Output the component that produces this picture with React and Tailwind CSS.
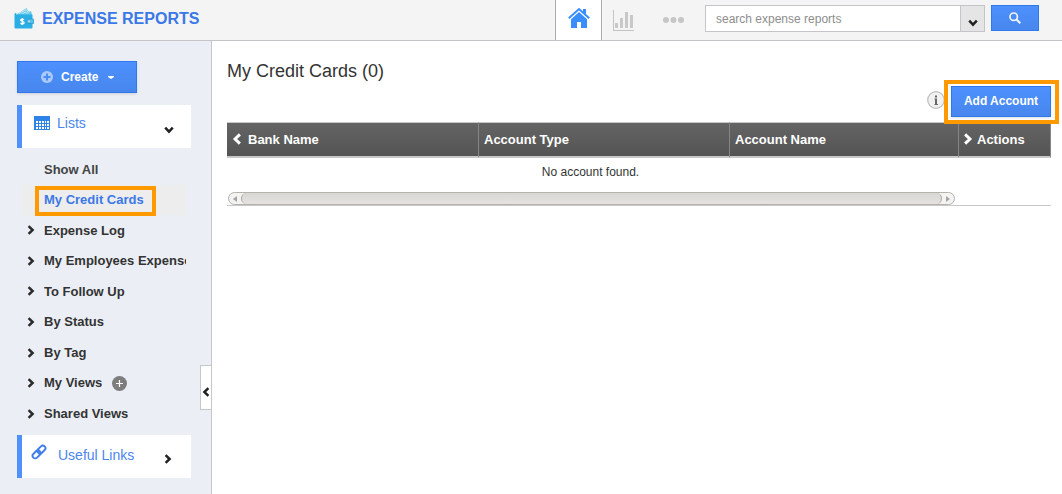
const views = [
  { label: 'Show All', leaf: true },
  { label: 'My Credit Cards', leaf: true, active: true },
  { label: 'Expense Log' },
  { label: 'My Employees Expenses' },
  { label: 'To Follow Up' },
  { label: 'By Status' },
  { label: 'By Tag' },
  { label: 'My Views', add: true },
  { label: 'Shared Views' },
];

const rotations = { right: '', left: 'rotate-180', down: 'rotate-90' };

function Chevron({ dir = 'right', className = 'h-2.5 w-2' }) {
  return (
    <svg viewBox="0 0 8 10" aria-hidden="true" className={`shrink-0 ${rotations[dir]} ${className}`}>
      <path d="M1.6 1.2 5.6 5 1.6 8.8" fill="none" stroke="currentColor" strokeWidth="2.5" />
    </svg>
  );
}

function WalletIcon() {
  return (
    <svg viewBox="0 0 20 23" aria-hidden="true" className="h-[23px] w-5">
      <path d="M2.500 7.500 12.500 1l2.300 3.700L17 4l1.500 4.500H2.500z" fill="#6ccbea" />
      <path d="m5 6.500 7.300-4 2 3.500M8.500 6.500l3-1.500 1.500 1.800" fill="none" stroke="#d5f1fa" strokeWidth=".8" />
      <path d="M.5 7.500C.5 6.500 1 6 2.500 6L2 7.500h15.500q1 0 1 1v12q0 1-1 1H1.500q-1 0-1-1z" fill="#29aee6" />
      <path d="M14.800 12H19.500v4.500h-4.700a2.250 2.250 0 0 1 0-4.500z" fill="#5cbfe6" stroke="#1c98cc" strokeWidth=".7" />
      <circle cx="15" cy="14.300" r=".8" fill="#d9f2fb" />
      <path d="M10 12.700c-1-.9-3.300-.7-3.300.6 0 1.500 3.400.8 3.400 2.400 0 1.400-2.500 1.500-3.600.5M8.300 10.900v7" fill="none" stroke="#fff" strokeWidth="1.300" />
    </svg>
  );
}

function HomeIcon() {
  return (
    <svg viewBox="0 0 22 22" aria-hidden="true" className="h-[22px] w-[22px] fill-[#3a8dfd]">
      <path d="M15 2h3v6l-3-2.700z" />
      <path d="M.8 11.300 11 2l10.200 9.300" fill="none" stroke="#3a8dfd" strokeWidth="2" />
      <path d="M3 12.200 11 5l8 7.200V21h-6v-6H9v6H3z" />
    </svg>
  );
}

function ChartIcon() {
  return (
    <svg viewBox="0 0 22 22" aria-hidden="true" className="h-[22px] w-[22px]" shapeRendering="crispEdges">
      <path d="M0 0h1v20h20v1H0z" fill="#c4c4c4" />
      <path d="M2 13h3v5H2zM7 8h3v10H7zM12 2h3v16h-3zM17 5h3v13h-3z" fill="#c8c8c8" />
    </svg>
  );
}

function LinkIcon() {
  return (
    <svg viewBox="0 0 16 16" aria-hidden="true" className="mb-2.5 h-4 w-4 shrink-0" fill="none" stroke="#3f7de8" strokeWidth="1.900">
      <g transform="rotate(-45 8 8)">
        <rect x="0" y="5.400" width="9" height="5.200" rx="2.600" />
        <rect x="7" y="5.400" width="9" height="5.200" rx="2.600" />
      </g>
    </svg>
  );
}

function Header() {
  return (
    <header className="flex h-[41px] items-stretch border-b border-[#c4c4c8] bg-[#f4f4f4]">
      <a href="#home" className="flex items-center gap-2 pb-1 pl-3.5 text-base font-bold text-[#3a78e8]">
        <WalletIcon />
        <span className="pt-0.5">EXPENSE REPORTS</span>
      </a>
      <nav className="ml-auto flex items-stretch">
        <a href="#home" aria-label="Home" className="flex w-[47px] items-center justify-center border-x border-[#ababab] bg-white pb-1">
          <HomeIcon />
        </a>
        <a href="#charts" aria-label="Charts" className="flex items-center pt-0.5 pl-[11px]">
          <ChartIcon />
        </a>
        <a href="#more" aria-label="More" className="flex items-center pl-7">
          <svg viewBox="0 0 21 6" aria-hidden="true" className="h-1.5 w-[21px] fill-[#c6c6c6]">
            <circle cx="3" cy="3" r="3" />
            <circle cx="10.500" cy="3" r="3" />
            <circle cx="18" cy="3" r="3" />
          </svg>
        </a>
      </nav>
      <form className="flex items-start pt-[5px] pr-[23px] pl-[21px]">
        <input
          type="text"
          aria-label="Search expense reports"
          placeholder="search expense reports"
          className="h-[27px] w-64 border border-[#c5c5c9] bg-white px-2.5 text-xs outline-none placeholder:text-[#8e8e8e]"
        />
        <button type="button" aria-label="Search options" className="flex h-[27px] w-6 items-center justify-center border border-l-0 border-[#c5c5c9] bg-[#e5e5e5] pt-2 text-[#222]">
          <Chevron dir="down" />
        </button>
        <button type="button" aria-label="Search" className="ml-1.5 flex h-[26px] w-12 items-center justify-center border border-[#3079ed] bg-linear-to-b from-[#4d90fe] to-[#4787ed]">
          <svg viewBox="0 0 12 12" aria-hidden="true" className="h-3 w-3" fill="none" stroke="#f0f5fe">
            <circle cx="4.700" cy="4.700" r="3.700" strokeWidth="1.700" />
            <path d="m7.300 7.300 4 4" strokeWidth="2" />
          </svg>
        </button>
      </form>
    </header>
  );
}

function ListItem({ item }) {
  return (
    <li className={`relative flex min-w-0 items-center pl-[5px] ${item.active ? 'bg-[#ededed]' : ''}`}>
      <span className="flex w-[17px] shrink-0 items-center text-[#2b2b2b]">{!item.leaf && <Chevron />}</span>
      <a
        href="#view"
        className={`overflow-hidden whitespace-nowrap ${item.active ? 'text-[#3c78e6]' : item.leaf ? 'text-[#444]' : 'text-[#333]'}`}
      >
        {item.label}
      </a>
      {item.add && (
        <button type="button" aria-label="Add view" className="ml-2.5">
          <svg viewBox="0 0 15 15" aria-hidden="true" className="h-[15px] w-[15px]">
            <circle cx="7.500" cy="7.500" r="7.500" fill="#7d7d7d" />
            <path d="M7.500 4v7M4 7.500h7" stroke="#fff" strokeWidth="1.200" />
          </svg>
        </button>
      )}
      {item.active && <span className="pointer-events-none absolute top-px left-[13px] h-[30px] w-[121px] border-4 border-[#ff9900]" />}
    </li>
  );
}

function Sidebar() {
  return (
    <aside className="relative w-[212px] shrink-0 border-r border-[#c6c7cb] bg-[#ebeff5] pt-5 pb-4 pl-[17px]">
      <button type="button" className="flex h-8 w-[120px] items-center border border-[#3079ed] bg-linear-to-b from-[#4d90fe] to-[#4787ed] pl-[23px] text-xs font-bold text-white shadow-sm">
        <svg viewBox="0 0 12 12" aria-hidden="true" className="h-3 w-3">
          <circle cx="6" cy="6" r="6" fill="#abcafa" />
          <path d="M6 2.500v7M2.500 6h7" stroke="#4b8bf5" strokeWidth="2" />
        </svg>
        <span className="ml-2">Create</span>
        <svg viewBox="0 0 6 3" aria-hidden="true" className="ml-2.5 h-[3px] w-1.5 fill-white">
          <path d="M0 0h6v1L3 3 0 1z" />
        </svg>
      </button>
      <button type="button" aria-expanded="true" className="mt-3 flex h-[43px] w-[174px] items-center border-l-[5px] border-[#4d90fe] bg-white pr-[18px] pl-3 text-sm text-[#4a86ee]">
        <svg viewBox="0 0 16 14" aria-hidden="true" className="mb-2 h-3.5 w-4 shrink-0" shapeRendering="crispEdges">
          <path d="M0 0h16v14H0z" fill="#2f82e6" />
          <path d="M2 5h2v2H2zM5 5h2v2H5zM8 5h2v2H8zM11 5h1v2h-1zM13 5h2v2h-2zM2 8h2v2H2zM5 8h2v2H5zM8 8h2v2H8zM11 8h1v2h-1zM13 8h2v2h-2zM2 11h2v2H2zM5 11h2v2H5zM8 11h2v2H8zM11 11h1v2h-1zM13 11h2v2h-2z" fill="#fff" />
        </svg>
        <span className="ml-[7px] pb-2">Lists</span>
        <Chevron dir="down" className="mt-1.5 ml-auto h-2.5 w-2 text-[#222]" />
      </button>
      <ul className="my-1.5 ml-[5px] grid min-h-[275px] w-[164px] auto-rows-fr grid-cols-1 text-[13px] font-bold">
        {views.map((item) => (
          <ListItem key={item.label} item={item} />
        ))}
      </ul>
      <button type="button" aria-expanded="false" className="flex h-[43px] w-[174px] items-center border-l-[5px] border-[#4d90fe] bg-white pr-[19px] pl-[9px] text-sm text-[#4a86ee]">
        <LinkIcon />
        <span className="ml-[11px] pb-1">Useful Links</span>
        <Chevron className="mt-1 ml-auto h-2.5 w-2 text-[#222]" />
      </button>
      <button type="button" aria-label="Collapse sidebar" className="absolute top-[324px] right-0 flex h-[45px] w-[11px] items-center justify-center border border-r-0 border-[#c6c7cb] bg-white pt-2 text-[#222]">
        <Chevron dir="left" />
      </button>
    </aside>
  );
}

function ScrollBar() {
  return (
    <div className="ml-px flex h-[13px] w-[727px] max-w-full overflow-hidden rounded-full border border-[#b5b1ad] bg-[#f4f3f2]">
      <button type="button" aria-label="Scroll left" className="flex w-3 items-center justify-center">
        <svg viewBox="0 0 4 6" aria-hidden="true" className="h-1.5 w-1 fill-[#a3a3a3]"><path d="M4 0v6L0 3z" /></svg>
      </button>
      <div className="flex-1 rounded-full border-x border-[#aaa6a2] bg-linear-to-b from-[#d8d7d5] to-[#e4e3e1]" />
      <button type="button" aria-label="Scroll right" className="flex w-3 items-center justify-center">
        <svg viewBox="0 0 4 6" aria-hidden="true" className="h-1.5 w-1 fill-[#a3a3a3]"><path d="M0 0v6l4-3z" /></svg>
      </button>
    </div>
  );
}

function AccountTable() {
  const th = 'h-9 border-t border-b-2 border-t-[#c8c8c8] border-b-[#c8c8c8] bg-linear-to-b from-[#646464] to-[#545454] p-0 text-left font-bold';
  return (
    <table className="w-full table-fixed border-separate border-spacing-0 text-xs text-[#333]">
      <colgroup>
        <col />
        <col />
        <col className="w-[229px]" />
        <col className="w-[93px]" />
      </colgroup>
      <thead className="text-[13px] text-white">
        <tr>
          <th className={th}>
            <span className="flex items-center pl-[5px]">
              <Chevron dir="left" className="h-3 w-2.5" />
              <span className="ml-1.5">Bank Name</span>
            </span>
          </th>
          <th className={`${th} border-l border-l-[#858585]`}><span className="pl-[5px]">Account Type</span></th>
          <th className={`${th} border-l border-l-[#858585]`}><span className="pl-[5px]">Account Name</span></th>
          <th className={`${th} border-x border-x-[#858585]`}>
            <span className="flex items-center pl-1">
              <Chevron className="h-3 w-2.5" />
              <span className="ml-1">Actions</span>
            </span>
          </th>
        </tr>
      </thead>
      <tbody>
        <tr>
          <td colSpan={3} className="h-[34px] p-0 pr-1 pb-1.5 text-center">No account found.</td>
          <td />
        </tr>
        <tr>
          <td colSpan={4} className="border-b border-[#c8c8c8] p-0"><ScrollBar /></td>
        </tr>
      </tbody>
    </table>
  );
}

export default function App() {
  return (
    <div className="flex min-h-screen flex-col bg-white font-['Liberation_Sans',Arial,sans-serif]">
      <Header />
      <div className="flex flex-1">
        <Sidebar />
        <main className="min-w-0 flex-1 pt-4 pr-[11px] pl-[15px]">
          <h1 className="text-lg leading-7 text-[#333]">My Credit Cards (0)</h1>
          <div className="flex h-[37px] items-start justify-end">
            <button type="button" aria-label="Information" className="mt-1.5 mr-1.5">
              <svg viewBox="0 0 18 18" aria-hidden="true" className="h-[18px] w-[18px]">
                <circle cx="9" cy="9" r="8.300" fill="#f1f1f1" stroke="#bdbdbd" strokeWidth="1.200" />
                <path d="M8 4.500h2v2H8zM7.500 7.500H10V13h1v1H7.500v-1h.5V8.500h-.5z" fill="#666" />
              </svg>
            </button>
            <div className="relative">
              <button type="button" className="mt-px flex h-[31px] w-[100px] items-center justify-center border border-[#3079ed] bg-linear-to-b from-[#4d90fe] to-[#4787ed] pb-0.5 text-xs font-bold text-white shadow-sm">
                Add Account
              </button>
              <span className="pointer-events-none absolute -top-[5px] -left-[7px] h-11 w-[115px] border-4 border-[#ff9900]" />
            </div>
          </div>
          <AccountTable />
        </main>
      </div>
    </div>
  );
}
